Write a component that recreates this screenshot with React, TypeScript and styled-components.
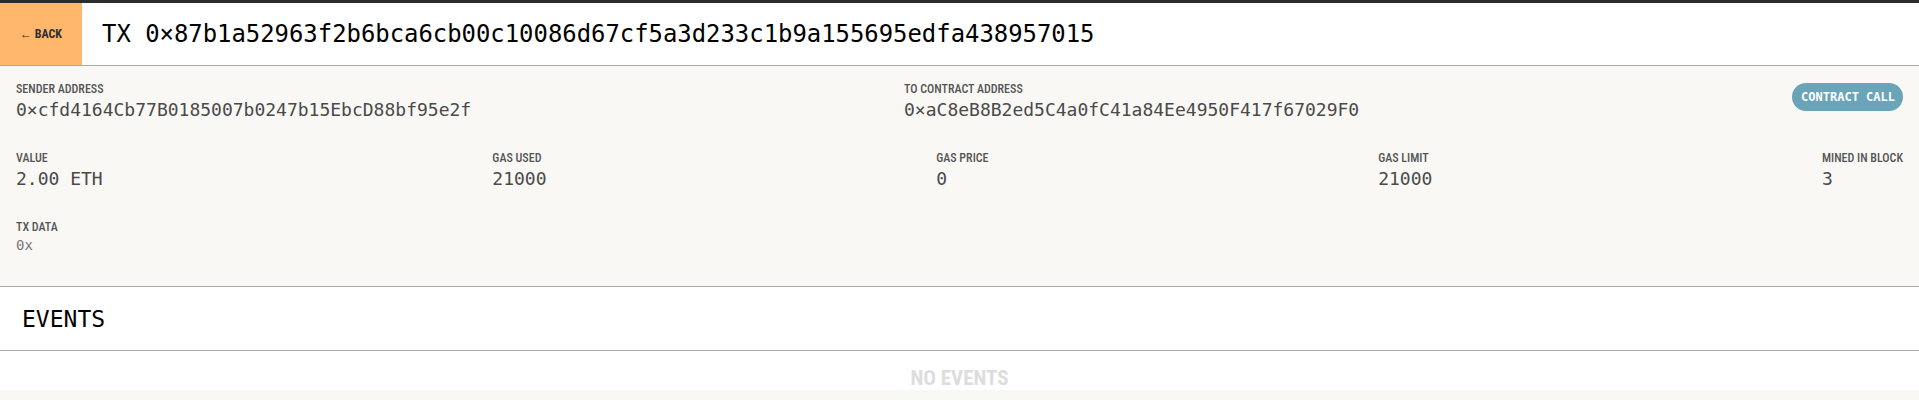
import { styled, createGlobalStyle } from "styled-components";

const GlobalStyle = createGlobalStyle`
	body {
		margin: 0;
		background: #f9f8f5;
	}
`;

const condensed = `"Roboto Condensed", "Liberation Sans Narrow", "Roboto", sans-serif`;
const mono = `"DejaVu Sans Mono", "Liberation Mono", monospace`;

const Page = styled.div`
	display: flex;
	flex-direction: column;
	border-top: 3px solid #2c2c2c;
`;
const Header = styled.div`
	display: flex;
	align-items: center;
	height: 62px;
	background: #ffffff;
	border-bottom: 1px solid #aaaaaa;
`;
const BackButton = styled.button`
	align-self: stretch;
	width: 82px;
	border: 0;
	padding: 0;
	background: #feb76b;
	color: #2f2f2f;
	font-family: ${condensed};
	font-stretch: condensed;
	font-size: 12px;
	font-weight: 700;
	cursor: pointer;
`;
const Title = styled.h1`
	margin: 0 0 0 20px;
	font-family: ${mono};
	font-size: 23.9px;
	font-weight: 400;
	color: #000000;
`;
const Details = styled.div`
	display: flex;
	flex-direction: column;
	gap: 30px;
	padding: 16px 16px 32px;
	border-bottom: 1px solid #aaaaaa;
`;
const Row = styled.div`
	display: flex;
	justify-content: space-between;
	align-items: flex-start;
`;
const Field = styled.div`
	display: flex;
	flex-direction: column;
	gap: 3px;
`;
const Label = styled.span`
	font-family: ${condensed};
	font-stretch: condensed;
	font-size: 12px;
	line-height: 14px;
	font-weight: 500;
	color: #555555;
`;
const Value = styled.span<{ $small?: boolean }>`
	font-family: ${mono};
	font-size: ${(p) => (p.$small ? "14px" : "18px")};
	line-height: ${(p) => (p.$small ? "17px" : "22px")};
	color: ${(p) => (p.$small ? "#777777" : "#4a4a4a")};
	white-space: nowrap;
`;
const Badge = styled.span`
	margin-top: 1px;
	height: 28px;
	padding: 0 8px 0 9px;
	display: flex;
	align-items: center;
	border-radius: 14px;
	background: #6aa4b9;
	color: #ffffff;
	font-family: ${mono};
	font-size: 12px;
	font-weight: 700;
`;
const EventsHeader = styled.h2`
	margin: 0;
	height: 63px;
	padding-left: 22px;
	display: flex;
	align-items: center;
	background: #ffffff;
	border-bottom: 1px solid #aaaaaa;
	font-family: ${mono};
	font-size: 23px;
	font-weight: 400;
	color: #000000;
`;
const EventsBody = styled.div`
	height: 39px;
	display: flex;
	justify-content: center;
	align-items: flex-start;
	padding-top: 17px;
	box-sizing: border-box;
	background: #ffffff;
`;
const Empty = styled.span`
	font-family: ${condensed};
	font-stretch: condensed;
	font-size: 21px;
	line-height: 21px;
	font-weight: 700;
	color: #dddddd;
`;

const tx = {
	hash: "0×87b1a52963f2b6bca6cb00c10086d67cf5a3d233c1b9a155695edfa438957015",
	from: "0×cfd4164Cb77B0185007b0247b15EbcD88bf95e2f",
	to: "0×aC8eB8B2ed5C4a0fC41a84Ee4950F417f67029F0",
	data: "0x",
};

const stats = [
	{ label: "VALUE", value: "2.00 ETH" },
	{ label: "GAS USED", value: "21000" },
	{ label: "GAS PRICE", value: "0" },
	{ label: "GAS LIMIT", value: "21000" },
	{ label: "MINED IN BLOCK", value: "3" },
];

export default function App() {
	return (
		<>
			<GlobalStyle />
			<Page>
				<Header>
					<BackButton>← BACK</BackButton>
					<Title>TX {tx.hash}</Title>
				</Header>
				<Details>
					<Row>
						<Field>
							<Label>SENDER ADDRESS</Label>
							<Value>{tx.from}</Value>
						</Field>
						<Field>
							<Label>TO CONTRACT ADDRESS</Label>
							<Value>{tx.to}</Value>
						</Field>
						<Badge>CONTRACT CALL</Badge>
					</Row>
					<Row>
						{stats.map((s) => (
							<Field key={s.label}>
								<Label>{s.label}</Label>
								<Value>{s.value}</Value>
							</Field>
						))}
					</Row>
					<Row>
						<Field>
							<Label>TX DATA</Label>
							<Value $small>{tx.data}</Value>
						</Field>
					</Row>
				</Details>
				<EventsHeader>EVENTS</EventsHeader>
				<EventsBody>
					<Empty>NO EVENTS</Empty>
				</EventsBody>
			</Page>
		</>
	);
}
